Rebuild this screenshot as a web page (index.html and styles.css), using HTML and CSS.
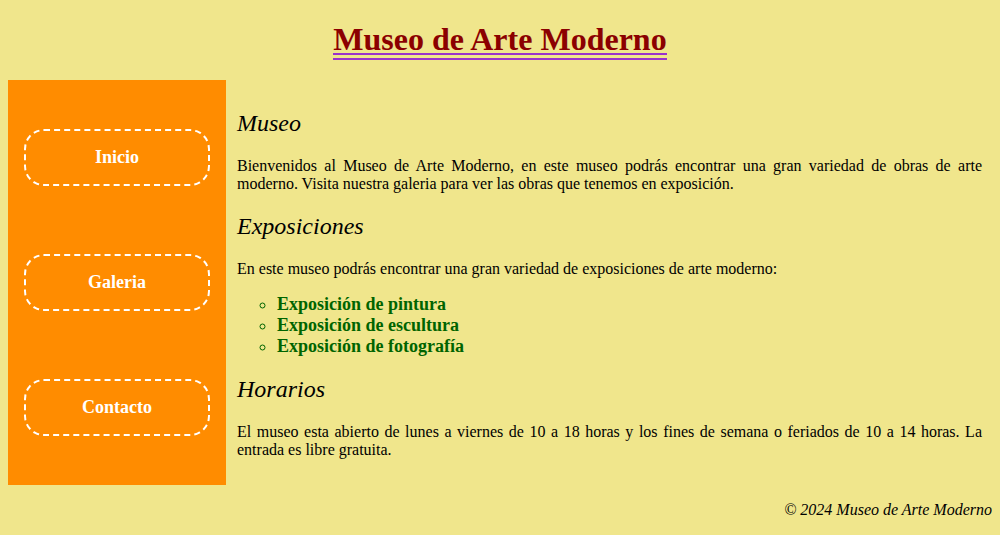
FILE: index.html
```html
<!DOCTYPE html>
<html lang="es">
<head>
<meta charset="utf-8">
<title>Museo de Arte Moderno</title>
<link rel="stylesheet" href="styles.css">
</head>
<body>
<header class="site-header">
  <h1 class="site-title"><span class="title-text">Museo de Arte Moderno</span></h1>
</header>
<div class="layout">
  <nav class="sidebar">
    <a class="nav-btn" href="#">Inicio</a>
    <a class="nav-btn" href="#">Galeria</a>
    <a class="nav-btn" href="#">Contacto</a>
  </nav>
  <main class="content">
    <h2 class="section-title">Museo</h2>
    <p class="text">Bienvenidos al Museo de Arte Moderno, en este museo podrás encontrar una gran variedad de obras de arte moderno. Visita nuestra galeria para ver las obras que tenemos en exposición.</p>
    <h2 class="section-title">Exposiciones</h2>
    <p class="text">En este museo podrás encontrar una gran variedad de exposiciones de arte moderno:</p>
    <ul class="expo-list">
      <li>Exposición de pintura</li>
      <li>Exposición de escultura</li>
      <li>Exposición de fotografía</li>
    </ul>
    <h2 class="section-title">Horarios</h2>
    <p class="text">El museo esta abierto de lunes a viernes de 10 a 18 horas y los fines de semana o feriados de 10 a 14 horas. La entrada es libre gratuita.</p>
  </main>
</div>
<footer class="site-footer">
  <p class="copy">© 2024 Museo de Arte Moderno</p>
</footer>
</body>
</html>
```

FILE: styles.css
```css
html, body {
  background: #f0e68c;
}
body {
  margin: 0 8px 8px;
  font-family: "Liberation Serif", "Times New Roman", serif;
  font-size: 16px;
  color: #000;
}
.site-header {
  padding-top: 0.1px;
}
.site-title {
  text-align: center;
  font-size: 32px;
  font-weight: bold;
  color: #8b0000;
  margin: 21.34px 0 21.44px;
}
.title-text {
  padding-bottom: 6px;
  background-image: linear-gradient(#9932cc, #9932cc), linear-gradient(#9932cc, #9932cc);
  background-size: 100% 2px, 100% 2px;
  background-position: 0 32px, 0 37px;
  background-repeat: no-repeat;
}
.layout {
  display: flex;
  align-items: stretch;
}
.sidebar {
  width: 218px;
  flex: 0 0 218px;
  box-sizing: border-box;
  background: #ff8c00;
  padding: 49px 16px 40px;
  display: flex;
  flex-direction: column;
  gap: 68px;
}
.nav-btn {
  display: block;
  border: 2px dashed #fff;
  border-radius: 20px;
  padding: 16px 0;
  color: #fff;
  font-weight: bold;
  font-size: 18px;
  text-align: center;
  text-decoration: none;
}
.content {
  flex: 1;
  padding: 10px 10px 10px 11px;
}
.section-title {
  font-size: 24px;
  font-style: italic;
  font-weight: normal;
  margin: 19.92px 0;
}
.content > .section-title:first-child {
  margin-top: 20px;
}
.text {
  text-align: justify;
  margin: 16px 0;
}
.expo-list {
  list-style: circle;
  margin: 16px 0;
  padding-left: 40px;
  color: #006400;
  font-weight: bold;
  font-size: 18px;
}
.site-footer {
  text-align: right;
}
.copy {
  font-style: italic;
  margin: 16px 0;
}
```
